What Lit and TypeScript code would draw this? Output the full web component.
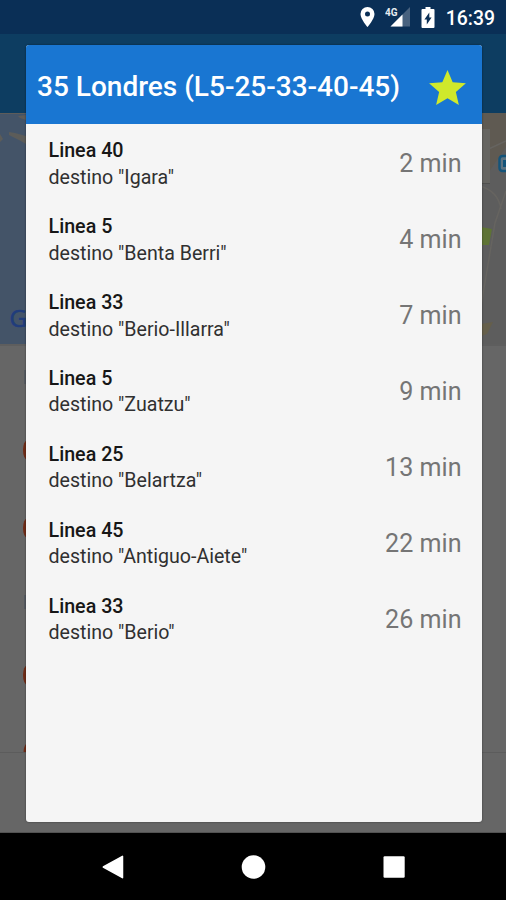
import { LitElement, html, css, svg } from "lit";
import { customElement, property } from "lit/decorators.js";

interface Arrival {
  line: string;
  destination: string;
  minutes: number;
}

const ARRIVALS: Arrival[] = [
  { line: "40", destination: "Igara", minutes: 2 },
  { line: "5", destination: "Benta Berri", minutes: 4 },
  { line: "33", destination: "Berio-Illarra", minutes: 7 },
  { line: "5", destination: "Zuatzu", minutes: 9 },
  { line: "25", destination: "Belartza", minutes: 13 },
  { line: "45", destination: "Antiguo-Aiete", minutes: 22 },
  { line: "33", destination: "Berio", minutes: 26 },
];

@customElement("status-bar")
export class StatusBar extends LitElement {
  static styles = css`
    :host {
      display: flex;
      align-items: center;
      justify-content: flex-end;
      height: 34px;
      padding-right: 11px;
      box-sizing: border-box;
      background: #0a2f56;
      color: #fff;
      font: 500 19.4px/34px Roboto, sans-serif;
    }
    svg {
      display: block;
      flex: none;
    }
    .pin {
      margin-right: 10px;
    }
    .signal {
      margin-right: 11px;
    }
    .battery {
      margin-right: 11px;
    }
    .network {
      font: 700 11px Roboto, sans-serif;
      fill: #e6ebf0;
    }
    .clock {
      padding-top: 3px;
    }
  `;

  render() {
    return html`
      <svg class="pin" width="15" height="20" viewBox="0 0 15 20">
        <path
          fill="#fff"
          fill-rule="evenodd"
          d="M7.5 0A7 7 0 0 0 .5 7c0 5 7 13 7 13s7-8 7-13a7 7 0 0 0-7-7zm0 4.6a2.5 2.5 0 1 1 0 5 2.5 2.5 0 0 1 0-5z"
        />
      </svg>
      <svg class="signal" width="25" height="20" viewBox="0 0 25 20">
        <path fill="#48627f" d="M25 0v19.5H5.5z" />
        <path fill="#fff" d="M17.5 7.5v12h-12z" />
        <text class="network" x="0" y="9" textLength="12.5" lengthAdjust="spacingAndGlyphs">4G</text>
      </svg>
      <svg class="battery" width="14" height="21" viewBox="0 0 14 21">
        <path fill="#fff" d="M4.5 0h5v2H12.500q1 0 1 1v17q0 1-1 1h-11q-1 0-1-1V3q0-1 1-1h3z" />
        <path fill="#0a2f56" d="M8.300 5.500v5h2.300L5.800 17.500v-5H3.400z" />
      </svg>
      <span class="clock">16:39</span>
    `;
  }
}

@customElement("map-backdrop")
export class MapBackdrop extends LitElement {
  static styles = css`
    :host {
      display: block;
      height: 720px;
      background: #666;
    }
    svg {
      display: block;
    }
    .brand {
      font: 500 24px "Open Sans", sans-serif;
      fill: #203c7c;
      stroke: #203c7c;
      stroke-width: 0.6px;
    }
  `;

  render() {
    const markers = [337, 415, 562];
    const labels = [264, 489];
    return html`
      <svg width="506" height="720" viewBox="0 0 506 720">
        <rect width="253" height="232" fill="#445468" />
        <rect x="253" width="253" height="232" fill="#5d5d5d" />
        <path fill="#5d5c5a" d="M0 0h26v1H0zM18 3l8-1v5l-6-2z" />
        <path fill="#5c5c59" d="M9 19l6 1 11 3v8l-7-4-10-5zM0 21l3 5-3 3z" />
        <path fill="#5f5a52" d="M470 0h36v34l-24 35h-12z" />
        <path fill="none" stroke="#666460" stroke-width="1.500" d="M480 40l26-12M480 73q18 5 21 23M506 78l-11 32-14 83" />
        <path fill="#666561" d="M481 16h9v54h-9z" />
        <path fill="none" stroke="#50504e" d="M481 70.500h9" />
        <path fill="#5e7335" d="M481 114l11 2-3 16h-8z" />
        <path fill="#655f4b" d="M481 211l12-2-6 12-6 2z" />
        <rect x="499.500" y="43" width="10" height="15" rx="3" fill="#5f7482" stroke="#14547a" stroke-width="2.500" />
        <path fill="#14547a" d="M503 47h3v7h-3z" />
        <text class="brand" x="9.500" y="213.500">G</text>
        <path fill="#5e5e5e" d="M0 231h506v2H0z" />
        ${markers.map((y) => svg`<ellipse cx="27" cy=${y} rx="4" ry="9.500" fill="#702c17" />`)}
        <path fill="#702c17" d="M23.500 640q0-6 2.500-9v9z" />
        ${labels.map((y) => svg`<rect x="24" y=${y - 7} width="2" height="14" fill="#565b61" />`)}
        <path fill="#5c5c5c" d="M0 639h506v1H0z" />
        <path fill="#525252" d="M0 719h506v1H0z" />
      </svg>
    `;
  }
}

@customElement("arrival-row")
export class ArrivalRow extends LitElement {
  @property({ attribute: false }) arrival!: Arrival;

  static styles = css`
    :host {
      display: flex;
      align-items: center;
      justify-content: space-between;
      height: 75.9px;
      font-family: Roboto, sans-serif;
    }
    .labels {
      padding-top: 1.6px;
    }
    .line {
      font-size: 19.7px;
      font-weight: 500;
      line-height: 26.5px;
      color: #171717;
    }
    .destination {
      font-size: 19.6px;
      font-weight: 400;
      line-height: 26.5px;
      color: #303030;
    }
    .minutes {
      font-size: 25.1px;
      color: #757575;
    }
  `;

  render() {
    const { line, destination, minutes } = this.arrival;
    return html`
      <div class="labels">
        <div class="line">Linea ${line}</div>
        <div class="destination">destino "${destination}"</div>
      </div>
      <div class="minutes">${minutes} min</div>
    `;
  }
}

@customElement("nav-bar")
export class NavBar extends LitElement {
  static styles = css`
    :host {
      display: flex;
      align-items: center;
      justify-content: space-between;
      height: 67px;
      padding: 0 100px;
      box-sizing: border-box;
      background: #000;
    }
    svg {
      display: block;
      width: 26px;
      height: 26px;
    }
  `;

  render() {
    return html`
      <svg viewBox="0 0 26 26">
        <path fill="#fff" stroke="#fff" stroke-width="1.500" stroke-linejoin="round" d="M3.300 13L22.500 2.300v21.400z" />
      </svg>
      <svg viewBox="0 0 26 26"><circle cx="13.500" cy="13" r="11.800" fill="#fff" /></svg>
      <svg viewBox="0 0 26 26"><rect x="3.500" y="2.300" width="21.200" height="21.400" rx="1.200" fill="#fff" /></svg>
    `;
  }
}

@customElement("app-root")
export class AppRoot extends LitElement {
  static styles = css`
    :host {
      display: block;
      position: relative;
      width: 506px;
      height: 900px;
      overflow: hidden;
      font-family: Roboto, sans-serif;
      background: #000;
    }
    .toolbar {
      height: 79px;
      background: #0d3d61;
    }
    .dialog {
      position: absolute;
      left: 25.5px;
      top: 45px;
      width: 456px;
      height: 777px;
      border-radius: 3px;
      overflow: hidden;
      background: #f5f5f5;
      box-shadow: 0 0 2px rgba(0, 0, 0, 0.5);
    }
    .header {
      display: flex;
      align-items: center;
      justify-content: space-between;
      height: 79px;
      padding: 0 15.5px 0 11.500px;
      box-sizing: border-box;
      background: #1976d2;
    }
    .title {
      margin: 0;
      padding-top: 4px;
      font-size: 28px;
      font-weight: 500;
      line-height: 34px;
      white-space: nowrap;
      color: #fff;
    }
    .star {
      display: block;
      flex: none;
      margin-top: 6px;
    }
    .list {
      padding: 2px 20px 0 23px;
    }
  `;

  render() {
    return html`
      <status-bar></status-bar>
      <div class="toolbar"></div>
      <map-backdrop></map-backdrop>
      <nav-bar></nav-bar>
      <section class="dialog">
        <header class="header">
          <h1 class="title">35 Londres (L5-25-33-40-45)</h1>
          <svg class="star" width="37" height="35" viewBox="2 2 20 19">
            <path
              fill="#cfe92b"
              d="M12 17.270L18.180 21l-1.640-7.030L22 9.240l-7.190-.61L12 2 9.190 8.630 2 9.240l5.460 4.730L5.820 21z"
            />
          </svg>
        </header>
        <div class="list">
          ${ARRIVALS.map((arrival) => html`<arrival-row .arrival=${arrival}></arrival-row>`)}
        </div>
      </section>
    `;
  }
}
